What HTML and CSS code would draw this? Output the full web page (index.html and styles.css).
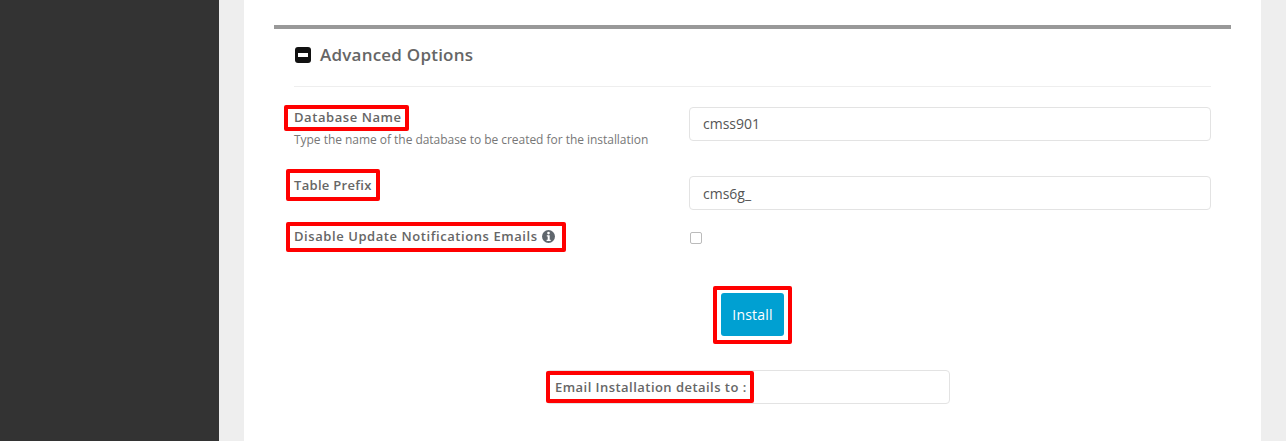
FILE: index.html
```html
<!DOCTYPE html>
<html lang="en">

<head>
    <meta charset="UTF-8">
    <title>Advanced Options</title>
    <link rel="stylesheet" href="styles.css">
</head>

<body>
    <div class="page">
        <div class="sidebar"></div>

        <div class="card">
            <div class="section">
                <div class="section-head">
                    <svg class="toggle" width="16" height="16" viewBox="0 0 16 16">
                        <rect width="16" height="16" rx="3" fill="#111"></rect>
                        <rect x="3" y="6" width="10" height="4" fill="#fff"></rect>
                    </svg>
                    <h3>Advanced Options</h3>
                </div>

                <div class="row row-db">
                    <div class="label-col">
                        <label class="mark mark-db">Database Name</label>
                        <p class="hint">Type the name of the database to be created for the installation</p>
                    </div>
                    <input class="field field-db" type="text" value="cmss901">
                </div>

                <div class="row row-prefix">
                    <div class="label-col">
                        <label class="mark mark-prefix">Table Prefix</label>
                    </div>
                    <input class="field" type="text" value="cms6g_">
                </div>

                <div class="row row-check">
                    <div class="label-col">
                        <label class="mark mark-check">Disable Update Notifications Emails
                            <svg class="info" width="13" height="13" viewBox="0 0 13 13">
                                <circle cx="6.5" cy="6.5" r="6.5" fill="#5f666d"></circle>
                                <circle cx="6.5" cy="3.100" r="1.300" fill="#fff"></circle>
                                <path d="M4.800 5.200h2.900v4.600h1v1.200H4.600V9.800h1.100V6.400H4.800z" fill="#fff"></path>
                            </svg>
                        </label>
                    </div>
                    <span class="checkbox"></span>
                </div>

                <div class="actions">
                    <div class="mark-install">
                        <button class="btn-install" type="button">Install</button>
                    </div>
                </div>

                <div class="email-row">
                    <input class="email-input" type="text">
                    <label class="mark mark-email">Email Installation details to :</label>
                </div>
            </div>
        </div>
    </div>
</body>

</html>
```

FILE: styles.css
```css
* {
    box-sizing: border-box;
}

html,
body {
    height: 100%;
}

body {
    margin: 0;
    overflow: hidden;
    background-color: #eeeeee;
    font-family: "Open Sans", Arial, sans-serif;
    font-size: 13px;
    color: #666;
}

.page {
    display: flex;
    height: 441px;
}

.sidebar {
    width: 219px;
    background-color: #333333;
}

.card {
    width: 1017px;
    margin-left: 25px;
    padding: 25px 30px 0;
    background-color: #fff;
}

.section {
    height: 416px;
    border-top: 4px solid #999;
    padding: 0 20px;
}

.section-head {
    display: flex;
    align-items: center;
    gap: 9px;
    height: 58px;
    margin-bottom: 20px;
    padding: 0 0 6px 1px;
    border-bottom: 1px solid #eeeeee;
}

.section-head h3 {
    margin: 0;
    font-size: 17px;
    font-weight: 600;
    letter-spacing: 0.22px;
    color: #666;
}

.toggle {
    flex: none;
}

.row {
    display: flex;
    align-items: flex-start;
}

.row-db {
    height: 69px;
}

.row-prefix {
    height: 46px;
}

.row-check {
    height: 64px;
}

.label-col {
    width: 395px;
}

/* red annotation boxes drawn on the screenshot */
.mark {
    display: block;
    border: 4px solid #f00;
    border-radius: 2px;
    font-weight: 600;
    font-size: 13px;
    letter-spacing: 0.57px;
    color: #666;
    white-space: nowrap;
}

.mark-db {
    width: 125px;
    height: 26px;
    margin: -2px 0 0 -10px;
    padding: 0 0 2px 6px;
    line-height: 16px;
}

.mark-prefix {
    width: 94px;
    height: 32px;
    margin: -7px 0 0 -8px;
    padding-left: 4px;
    line-height: 24px;
    letter-spacing: 0.3px;
}

.mark-check {
    width: 280px;
    height: 30px;
    margin-left: -8px;
    padding: 0 0 2px 4px;
    line-height: 20px;
}

.hint {
    margin: 0;
    font-size: 12px;
    line-height: 17px;
    letter-spacing: -0.035px;
    color: #777;
}

.field {
    width: 522px;
    height: 34px;
    padding: 0 13px;
    border: 1px solid #e3e3e3;
    border-radius: 4px;
    font-family: inherit;
    font-size: 14px;
    color: #555;
}

.field-db {
    padding-bottom: 2px;
}

.info {
    vertical-align: -2px;
}

.checkbox {
    width: 12px;
    height: 12px;
    margin: 10px 0 0 1px;
    border: 1px solid #bbb;
    border-radius: 2px;
    background-color: #fff;
}

.actions {
    display: flex;
    justify-content: center;
}

.mark-install {
    display: flex;
    padding: 3px 4px 4px;
    border: 4px solid #f00;
    border-radius: 2px;
}

.btn-install {
    width: 63px;
    height: 43px;
    border: none;
    border-radius: 3px;
    background-color: #00a0d2;
    color: #fff;
    font-family: inherit;
    font-size: 14px;
    letter-spacing: 0.2px;
}

.email-row {
    position: relative;
    width: 404px;
    height: 34px;
    margin: 26px 0 0 252px;
}

.email-input {
    width: 100%;
    height: 34px;
    border: 1px solid #e3e3e3;
    border-radius: 4px;
}

.mark-email {
    position: absolute;
    left: 0;
    top: 1px;
    width: 208px;
    height: 32px;
    padding-left: 5px;
    line-height: 24px;
    letter-spacing: 0.46px;
}
```
